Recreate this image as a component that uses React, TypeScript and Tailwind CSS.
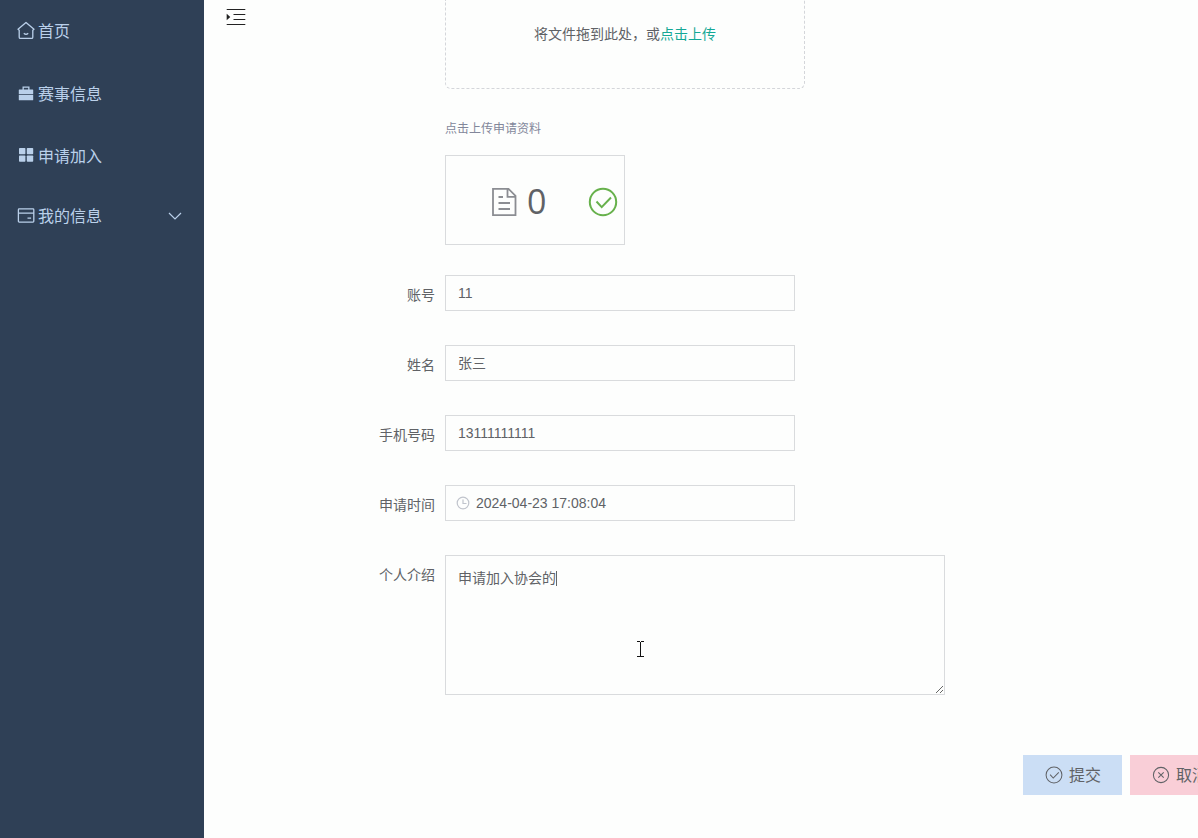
import type { ReactNode } from 'react';

interface MenuItem {
  label: string;
  icon: ReactNode;
  className: string;
  hasChildren?: boolean;
}

const HomeIcon = () => (
  <svg width="20" height="20" viewBox="0 0 20 20" fill="none" stroke="currentColor" strokeWidth="1.3" strokeLinejoin="round">
    <path d="M10 1.4 2 8.2l1.2 1v7a1.2 1.2 0 0 0 1.2 1.2h11.2a1.2 1.2 0 0 0 1.2-1.2v-7l1.2-1zM7.8 12.2c1.2 1.2 3.2 1.2 4.4 0" />
  </svg>
);

const BriefcaseIcon = () => (
  <svg width="20" height="20" viewBox="0 0 20 20" fill="currentColor">
    <path d="M6.5 5.4V2.4h7v3h3.2a.5.5 0 0 1 .5.5v4H2.8v-4a.5.5 0 0 1 .5-.5zm1.3 0h4.4V3.7H7.8zM2.8 10.7h14.4v5.1a.5.5 0 0 1-.5.5H3.3a.5.5 0 0 1-.5-.5z" />
  </svg>
);

const GridIcon = () => (
  <svg width="20" height="20" viewBox="0 0 20 20" fill="currentColor">
    <rect x="3" y="2" width="6.4" height="6.2" rx=".7" />
    <rect x="10.8" y="2" width="6.4" height="6.2" rx=".7" />
    <rect x="3" y="9.5" width="6.4" height="6.2" rx=".7" />
    <rect x="10.8" y="9.5" width="6.4" height="6.2" rx=".7" />
  </svg>
);

const CardIcon = () => (
  <svg width="20" height="20" viewBox="0 0 20 20" fill="none" stroke="currentColor" strokeWidth="1.3">
    <rect x="2.4" y="2.9" width="15.4" height="13.2" rx=".8" />
    <path d="M2.4 7.2h15.4M11.5 12.2h3.6" />
  </svg>
);

const FoldIcon = () => (
  <svg width="20" height="18" viewBox="0 0 20 18" fill="none" stroke="#222" strokeWidth="1.1">
    <path d="M.7 1.5h18.6M7.5 6.5h11.8M7.5 11.5h11.8M.7 16.5h18.6" />
    <path d="M.7 5.8v6.4L4.3 9z" fill="#222" stroke="none" />
  </svg>
);

const DocumentIcon = () => (
  <svg width="26" height="30" viewBox="0 0 26 30" fill="none" stroke="#8b8d92" strokeWidth="1.8">
    <path d="M2 1.8h15.5l7 7v19.4H2zM16.5 1.8v8h8M7.5 10h4.5M7.5 16h11.5M7.5 22h11.5" />
  </svg>
);

const CheckIcon = ({ size, color, width }: { size: number; color: string; width: number }) => (
  <svg width={size} height={size} viewBox="0 0 30 30" fill="none" stroke={color} strokeWidth={width}>
    <circle cx="15" cy="15" r="13.2" />
    <path d="m8.5 14.5 5.2 5.6 9.3-9.6" />
  </svg>
);

const CloseIcon = () => (
  <svg width="18" height="18" viewBox="0 0 18 18" fill="none" stroke="#606266" strokeWidth="1.05">
    <circle cx="9" cy="9" r="7.6" />
    <path d="m6.3 6.3 5.4 5.4M11.7 6.3l-5.4 5.4" />
  </svg>
);

const ClockIcon = () => (
  <svg width="14" height="14" viewBox="0 0 14 14" fill="none" stroke="#c0c4cc" strokeWidth="1.2">
    <circle cx="7" cy="7" r="5.8" />
    <path d="M7 3.5V7.5h3.5" />
  </svg>
);

const menu: MenuItem[] = [
  { label: '首页', icon: <HomeIcon />, className: 'h-[62px]' },
  { label: '赛事信息', icon: <BriefcaseIcon />, className: 'h-[64px]' },
  { label: '申请加入', icon: <GridIcon />, className: 'h-[60px]' },
  { label: '我的信息', icon: <CardIcon />, className: 'h-[60px]', hasChildren: true },
];

const fields = [
  { label: '账号', value: '11' },
  { label: '姓名', value: '张三' },
  { label: '手机号码', value: '13111111111' },
  { label: '申请时间', value: '2024-04-23 17:08:04', clock: true },
];

function Sidebar() {
  return (
    <aside className="w-[204px] shrink-0 bg-[#2f4056] text-base text-[#bad0ea]">
      {menu.map((item) => (
        <div key={item.label} className={`flex items-center pl-4 pr-[22px] ${item.className}`}>
          {item.icon}
          <span className="ml-0.5 flex-1 pt-px">{item.label}</span>
          {item.hasChildren && (
            <svg width="14" height="8" viewBox="0 0 14 8" fill="none" stroke="currentColor" strokeWidth="1.2">
              <path d="m1 1 6 6 6-6" />
            </svg>
          )}
        </div>
      ))}
    </aside>
  );
}

function Label({ children }: { children: ReactNode }) {
  return <label className="w-[241px] shrink-0 pr-2.5 text-right text-sm leading-10">{children}</label>;
}

export default function App() {
  return (
    <div className="flex h-[838px] w-[1198px] overflow-hidden bg-[#fdfefd] font-[family-name:'Liberation_Sans','Noto_Sans_CJK_SC',sans-serif] text-[#606266]">
      <Sidebar />
      <main className="relative min-w-0 flex-1 overflow-hidden">
        <div className="absolute left-[22px] top-2">
          <FoldIcon />
        </div>

        {/* Upload */}
        <div className="ml-[241px]">
          <div className="flex h-[89px] w-[360px] justify-center rounded-b-md border border-t-0 border-dashed border-[#d4d6da] pt-6 text-sm">
            <span>将文件拖到此处，或</span>
            <span className="text-[#14a896]">点击上传</span>
          </div>
          <div className="mt-[31px] h-[35px] text-xs leading-[18px] text-[#82879a]">点击上传申请资料</div>
          <div className="flex h-[90px] w-[180px] items-center border border-[#d9dbdd] pl-[45px] pt-1">
            <DocumentIcon />
            <span className="-mt-0.5 ml-2.5 w-[61px] font-[family-name:'Open_Sans','Noto_Sans',sans-serif] text-[34px] leading-none">0</span>
            <CheckIcon size={30} color="#67b14c" width={2} />
          </div>
        </div>

        {/* Form */}
        <div className="mt-[30px] flex flex-col gap-[30px]">
          {fields.map((field) => (
            <div key={field.label} className="flex h-10">
              <Label>{field.label}</Label>
              <div className="flex h-9 w-[350px] items-center border border-[#d9dbdd] px-3 text-sm">
                {field.clock && (
                  <span className="-ml-1.5 mr-1 flex w-5 justify-center pl-px">
                    <ClockIcon />
                  </span>
                )}
                <input className="min-w-0 flex-1 bg-transparent outline-none" defaultValue={field.value} />
              </div>
            </div>
          ))}
          <div className="flex h-[140px]">
            <Label>个人介绍</Label>
            <div className="relative h-[140px] w-[500px]">
              <textarea
                className="block h-full w-full border border-[#d9dbdd] bg-transparent px-3 py-3 text-sm outline-none"
                defaultValue="申请加入协会的"
              />
              <span className="absolute left-[111px] top-4 h-[15px] w-px bg-[#666]" />
              {/* Mouse pointer */}
              <svg className="absolute left-48 top-[86px]" width="7" height="17" viewBox="0 0 7 17" fill="none" stroke="#111">
                <path d="M0 .5h3M4 .5h3M3.5 1v15M0 15.5h3M4 15.5h3" />
              </svg>
            </div>
          </div>
        </div>

        {/* Actions */}
        <div className="ml-[819px] mt-[60px] flex w-[230px] gap-2 text-base">
          <button className="flex h-10 w-[99px] items-center bg-[#cbdef5] pb-px pl-[22px]">
            <CheckIcon size={18} color="#606266" width={1.7} />
            <span className="ml-1.5 pt-0.5">提交</span>
          </button>
          <button className="flex h-10 w-[99px] items-center bg-[#f9ced7] pb-px pl-[22px]">
            <CloseIcon />
            <span className="ml-1.5 pt-0.5">取消</span>
          </button>
        </div>
      </main>
    </div>
  );
}
